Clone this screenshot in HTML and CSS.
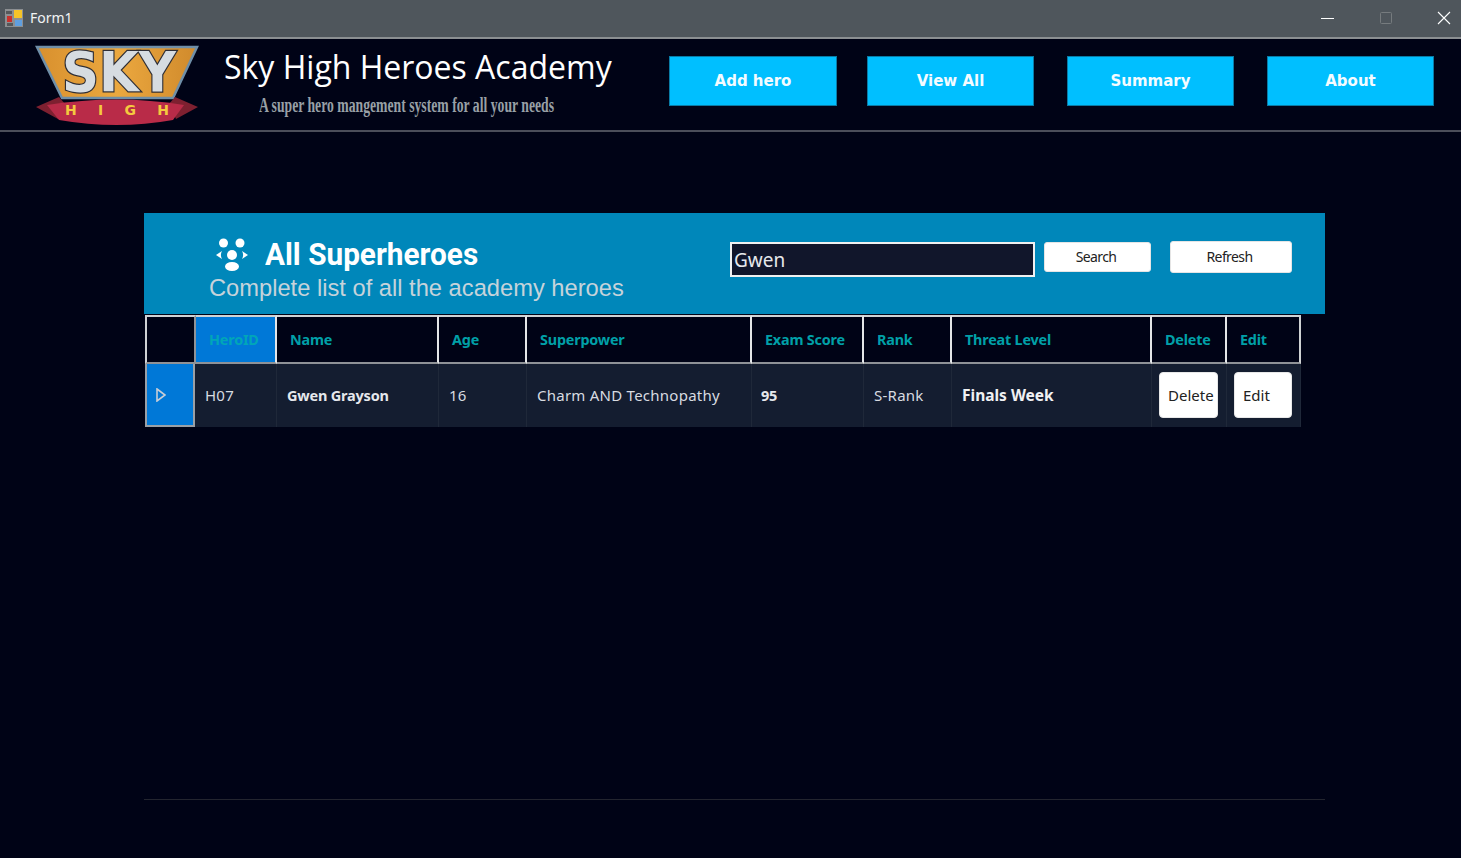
FILE: index.html
```html
<!DOCTYPE html>
<html lang="en">
<head>
  <meta charset="UTF-8">
  <title>Form1</title>
  <link rel="stylesheet" href="styles.css">
</head>
<body>
  <div class="titlebar">
    <svg class="form-icon" width="18" height="18" viewBox="0 0 18 18">
      <rect width="18" height="18" fill="#8c8f92"/>
      <rect x="9" y="1" width="8" height="8" fill="#f6c427"/>
      <rect x="10" y="11" width="7" height="6" fill="#5f9fe0"/>
      <rect x="2" y="7" width="5" height="6" fill="#c9302c"/>
      <rect x="1" y="2" width="6" height="3" fill="#55585b"/>
      <rect x="2" y="14" width="6" height="3" fill="#55585b"/>
    </svg>
    <span class="form-name">Form1</span>
    <div class="window-btns">
      <svg width="14" height="14" viewBox="0 0 14 14"><path d="M0 7.5H13" stroke="#fff" stroke-width="1"/></svg>
      <svg width="14" height="14" viewBox="0 0 14 14"><rect x="1.5" y="1.5" width="11" height="11" rx="1" fill="none" stroke="#767b7e" stroke-width="1"/></svg>
      <svg width="14" height="14" viewBox="0 0 14 14"><path d="M1 1L13 13M13 1L1 13" stroke="#fff" stroke-width="1.1"/></svg>
    </div>
  </div>

  <header class="topbar">
    <svg class="logo" width="166" height="92" viewBox="0 -8 166 92">
      <defs>
        <linearGradient id="wood" x1="0" y1="0" x2="1" y2="0">
          <stop offset="0" stop-color="#d8902e"/>
          <stop offset="0.5" stop-color="#eba83f"/>
          <stop offset="1" stop-color="#d08a2c"/>
        </linearGradient>
      </defs>
      <path d="M3 3H163L139 54H28Z" fill="url(#wood)" stroke="#6f8fa8" stroke-width="2.5"/>
      <text x="85" y="47" class="logo-sky" textLength="114" lengthAdjust="spacingAndGlyphs">SKY</text>
      <path d="M2 63L25 53L31 60L24 75Z" fill="#7e2030"/>
      <path d="M164 63L141 53L135 60L142 75Z" fill="#7e2030"/>
      <path d="M13 61Q83 50 150 61L139 76Q83 86 25 76Z" fill="#b92b48"/>
      <text x="83" y="71" class="logo-high" textLength="104">H I G H</text>
    </svg>
    <div class="brand">
      <div class="brand-name">Sky High Heroes Academy</div>
      <div class="brand-sub"><span>A super hero mangement system for all your needs</span></div>
    </div>
    <nav class="nav">
      <button class="nav-btn">Add hero</button>
      <button class="nav-btn">View All</button>
      <button class="nav-btn">Summary</button>
      <button class="nav-btn">About</button>
    </nav>
  </header>

  <main class="content">
    <section class="panel">
      <div class="panel-title">
        <div class="panel-head">
          <svg width="34" height="34" viewBox="0 0 34 34" fill="#fff">
            <circle cx="8.5" cy="6" r="4.5"/>
            <circle cx="25" cy="6" r="4.5"/>
            <circle cx="17" cy="18" r="5"/>
            <path d="M7 14L1 18L7 22C5.5 19.5 5.5 16.5 7 14Z"/>
            <path d="M27 14L33 18L27 22C28.5 19.5 28.5 16.5 27 14Z"/>
            <ellipse cx="17" cy="29.5" rx="7" ry="4.5"/>
          </svg>
          <h1>All Superheroes</h1>
        </div>
        <p>Complete list of all the academy heroes</p>
      </div>
      <input class="search-box" type="text" value="Gwen">
      <button class="panel-btn search-btn">Search</button>
      <button class="panel-btn refresh-btn">Refresh</button>
    </section>

    <div class="grid">
      <div class="hcell corner"></div>
      <div class="hcell selected">HeroID</div>
      <div class="hcell">Name</div>
      <div class="hcell">Age</div>
      <div class="hcell">Superpower</div>
      <div class="hcell">Exam Score</div>
      <div class="hcell">Rank</div>
      <div class="hcell">Threat Level</div>
      <div class="hcell">Delete</div>
      <div class="hcell">Edit</div>

      <div class="row-head"><svg width="10" height="14" viewBox="0 0 10 14"><path d="M1 1L9 7L1 13Z" fill="none" stroke="#c8ced6" stroke-width="1.6"/></svg></div>
      <div class="cell id-cell">H07</div>
      <div class="cell bold">Gwen Grayson</div>
      <div class="cell">16</div>
      <div class="cell">Charm AND Technopathy</div>
      <div class="cell bold score">95</div>
      <div class="cell">S-Rank</div>
      <div class="cell threat">Finals Week</div>
      <div class="cell action"><button class="row-btn">Delete</button></div>
      <div class="cell action"><button class="row-btn edit">Edit</button></div>
    </div>

    <div class="footer-line"></div>
  </main>
</body>
</html>
```

FILE: styles.css
```css
* {
  box-sizing: border-box;
}
html, body {
  height: 100%;
}
body {
  margin: 0;
  background: #000316;
  color: #fff;
  font-family: "Noto Sans", sans-serif;
  overflow: hidden;
  display: flex;
  flex-direction: column;
}

/* window frame */
.titlebar {
  height: 39px;
  flex: none;
  background: #4f565c;
  border-bottom: 2px solid #8b8f92;
  display: flex;
  align-items: center;
  padding: 0 0 2px 5px;
}
.form-icon {
  margin-right: 7px;
}
.form-name {
  font-size: 14px;
  color: #f2f3f4;
}
.window-btns {
  margin-left: auto;
  display: flex;
  gap: 44px;
  padding-right: 10px;
}

/* top bar */
.topbar {
  height: 93px;
  flex: none;
  border-bottom: 2px solid #4b4e5a;
  display: flex;
  align-items: flex-start;
  padding-left: 34px;
}
.logo {
  margin-top: -3px;
  flex: none;
}
.logo-sky {
  font: bold 56px "DejaVu Sans", sans-serif;
  fill: #d6dce1;
  stroke: #2f2f36;
  stroke-width: 2.5px;
  paint-order: stroke;
  text-anchor: middle;
}
.logo-high {
  font: bold 14px "DejaVu Sans", sans-serif;
  fill: #f4c93f;
  text-anchor: middle;
}
.brand {
  width: 445px;
  margin-left: 24px;
  flex: none;
}
.brand-name {
  font-family: "Open Sans", sans-serif;
  font-size: 32px;
  line-height: 44px;
  margin-top: 6px;
  white-space: nowrap;
}
.brand-sub {
  margin-top: 4px;
  padding-left: 35px;
  font: bold 20px/24px "Liberation Serif", serif;
  color: #98a0a6;
  white-space: nowrap;
}
.brand-sub span {
  display: inline-block;
  transform: scaleX(0.685);
  transform-origin: left center;
}
.nav {
  display: flex;
  gap: 30px;
  margin-top: 17px;
}
.nav-btn {
  width: 167px;
  height: 50px;
  background: #00bfff;
  border: 1px solid #0a7ba5;
  color: #f4fbff;
  font: bold 15px "DejaVu Sans", sans-serif;
}
.nav-btn:first-child {
  width: 168px;
}
.nav-btn:nth-child(n+3) {
  margin-left: 3px;
}

/* main content */
.content {
  flex: 1;
  padding: 81px 136px 0 144px;
  display: flex;
  flex-direction: column;
}
.panel {
  height: 101px;
  background: #0087ba;
  display: flex;
  align-items: flex-start;
  flex: none;
}
.panel-title {
  width: 586px;
  padding: 21px 0 0 65px;
  flex: none;
}
.panel-head {
  display: flex;
  align-items: center;
  gap: 16px;
  padding-left: 6px;
}
.panel-head h1 {
  margin: 0;
  font: bold 32px/40px Roboto, sans-serif;
  white-space: nowrap;
  transform: scaleX(0.93);
  transform-origin: left center;
}
.panel-title p {
  margin: 1px 0 0;
  font: 23.7px/26px "Liberation Sans", sans-serif;
  color: #c6d3da;
  white-space: nowrap;
}
.search-box {
  width: 305px;
  height: 35px;
  margin-top: 29px;
  padding: 0 2px;
  background: #11162b;
  border: 2px solid #f0f0f0;
  color: #e6e8ec;
  font: 19px "Noto Sans", sans-serif;
  outline: none;
}
.panel-btn {
  background: #fff;
  border: 1px solid #e5e5e5;
  border-radius: 3px;
  color: #222;
  font: 14px "Noto Sans", sans-serif;
  letter-spacing: -0.6px;
  padding: 0 3px 2px 0;
}
.search-btn {
  width: 107px;
  height: 30px;
  margin: 29px 0 0 9px;
}
.refresh-btn {
  width: 122px;
  height: 32px;
  margin: 28px 0 0 19px;
}

/* data grid */
.grid {
  margin: 1px 0 0 1px;
  width: 1156px;
  display: grid;
  grid-template-columns: 51px 81px 162px 88px 225px 112px 88px 200px 75px 74px;
  grid-template-rows: 49px 63px;
  flex: none;
}
.hcell {
  background: #000316;
  border-top: 2px solid #cfd2d4;
  border-bottom: 2px solid #8f9297;
  border-right: 2px solid #e4e6e8;
  padding-left: 13px;
  display: flex;
  align-items: center;
  color: #00a0a8;
  font: bold 14.4px "Noto Sans", sans-serif;
  letter-spacing: -0.2px;
}
.corner {
  border-left: 2px solid #cfd2d4;
  border-right-color: #8f9297;
}
.selected {
  background: #0078d7;
  color: #00a6b8;
}
.hcell:nth-child(10) {
  border-right-color: #cfd2d4;
}
.row-head {
  background: #0078d7;
  border: 2px solid #9aa0a6;
  border-top: 0;
  width: 50px;
  display: flex;
  align-items: center;
  padding-left: 9px;
}
.cell {
  background: #141d30;
  border-right: 1px solid #1f2839;
  display: flex;
  align-items: center;
  padding: 0 0 2px 10px;
  font-size: 15px;
  letter-spacing: 0.25px;
  color: #d8dbe0;
}
.row-head + .cell {
  margin-left: -1px;
}
.bold {
  font-size: 14.5px;
  font-weight: 700;
  letter-spacing: -0.2px;
  color: #e6e8ec;
}
.score {
  padding-left: 9px;
}
.threat {
  font-size: 15.5px;
  font-weight: 700;
  letter-spacing: 0;
  color: #f0f1f3;
}
.action {
  padding-left: 7px;
}
.row-btn {
  width: 59px;
  height: 46px;
  background: #fff;
  border: 1px solid #e8e8e8;
  border-radius: 4px;
  color: #222;
  font: 15px "Noto Sans", sans-serif;
  text-align: left;
  padding: 0 0 0 8px;
  white-space: nowrap;
}
.edit {
  width: 58px;
}
.footer-line {
  margin-top: auto;
  margin-bottom: 58px;
  height: 1px;
  background: #23252f;
}
```
